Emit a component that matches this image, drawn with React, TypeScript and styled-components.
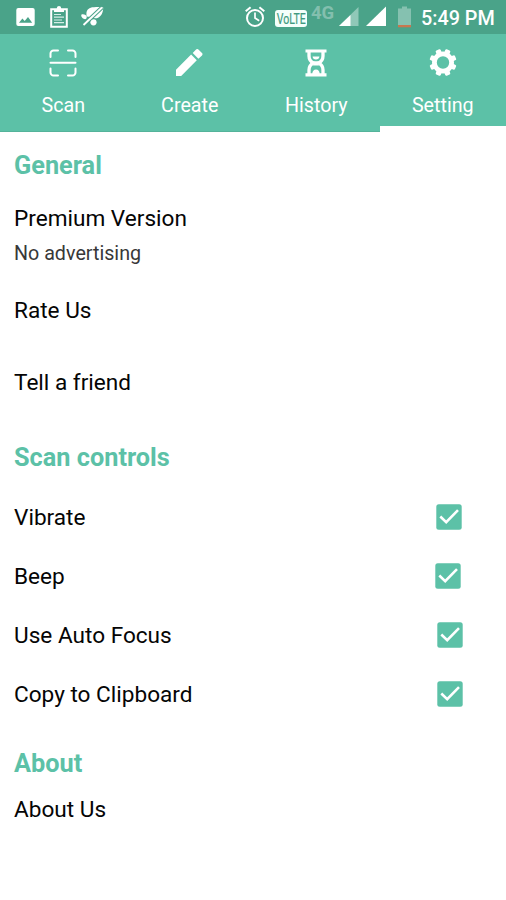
import React from 'react';
import styled, { createGlobalStyle } from 'styled-components';

const GlobalStyle = createGlobalStyle`
  * { box-sizing: border-box; }
  body { margin: 0; background: #fff; font-family: Roboto, "Liberation Sans", sans-serif; }
`;

const Screen = styled.main`
  width: 506px;
  height: 900px;
  overflow: hidden;
  background: #fff;
  color: #050505;
`;

const StatusBar = styled.header`
  display: flex;
  height: 34px;
  background: #4aa389;
  color: #fff;
`;

const StatusIcon = styled.svg<{ $gap: number }>`
  flex: none;
  height: 34px;
  margin-left: ${p => p.$gap}px;
`;

const VolteBadge = styled.span`
  display: flex;
  justify-content: center;
  width: 32px;
  height: 17px;
  margin: 10px 0 0 10px;
  border-radius: 3px;
  background: #f4fffb;
  color: #3f9a80;
`;

const VolteText = styled.span`
  flex: none;
  font-size: 15.5px;
  line-height: 18px;
  transform: scaleX(0.68);
  -webkit-text-stroke: 0.2px currentColor;
`;

const NetworkType = styled.span`
  width: 27px;
  margin: 3px 0 0 4px;
  font-size: 18.5px;
  font-weight: 700;
  line-height: 20px;
  color: #83bfae;
`;

const Clock = styled.time`
  margin-left: 10px;
  font-size: 19.8px;
  font-weight: 500;
  line-height: 37px;
  white-space: nowrap;
`;

const Tabs = styled.nav`
  display: grid;
  grid-template-columns: repeat(4, 1fr);
  height: 98px;
  background: #5cc1a7;
`;

const Tab = styled.button<{ $active?: boolean }>`
  display: flex;
  flex-direction: column;
  align-items: center;
  gap: 17px;
  padding: 15px 0 0;
  border: 0;
  border-bottom: ${p => (p.$active ? '6px solid #fff' : '1px solid #54b39a')};
  background: transparent;
  color: #fff;
  font: 400 19.7px/24px Roboto, sans-serif;
`;

const TabIcon = styled.svg`
  flex: none;
  width: 28px;
  height: 28px;
  display: block;
`;

const Settings = styled.div`
  padding: 0 0 0 14px;
`;

const Heading = styled.h2<{ $height: number; $top?: number }>`
  display: flex;
  align-items: center;
  height: ${p => p.$height}px;
  margin: ${p => p.$top ?? 0}px 0 0;
  color: #5cc1a7;
  font-size: 25.3px;
  font-weight: 700;
`;

const Row = styled.div<{ $height: number; $top?: number }>`
  display: flex;
  align-items: center;
  justify-content: space-between;
  height: ${p => p.$height}px;
  margin-top: ${p => p.$top ?? 0}px;
  font-size: 22.6px;
`;

const OptionLabel = styled.span`
  padding-top: 1px;
`;

const Note = styled.p`
  margin: 0;
  font-size: 19.7px;
  line-height: 32px;
  color: #383838;
`;

const Check = styled.svg<{ $right: number }>`
  width: 26px;
  height: 26px;
  margin-right: ${p => p.$right}px;
`;

const options = [
  { label: 'Vibrate', right: 44.4 },
  { label: 'Beep', right: 45.4 },
  { label: 'Use Auto Focus', right: 43.4 },
  { label: 'Copy to Clipboard', right: 42.6 },
];

function SignalAndBattery() {
  return (
    <>
      <StatusIcon $gap={1} width="20" viewBox="0 0 20 34" fill="#fff">
        <path d="M0 26 19.500 7v19Z" fill="#90c8b8" />
        <path d="M0 26 11.500 15v11Z" />
      </StatusIcon>
      <StatusIcon $gap={7} width="20" viewBox="0 0 20 34" fill="#fff">
        <path d="M0 26 20 6.500V26Z" />
      </StatusIcon>
      <StatusIcon $gap={12} width="13" viewBox="0 0 13 34">
        <path d="M4 6.500h5v2h4v17H0v-17h4Z" fill="#85c1b0" />
        <path d="M0 25h13v2.300H0Z" fill="#c7774f" />
      </StatusIcon>
    </>
  );
}

const teeth = [22.5, 67.5, 112.5, 157.5, 202.5, 247.5, 292.5, 337.5];

export default function App() {
  return (
    <Screen>
      <GlobalStyle />
      <StatusBar>
        <StatusIcon $gap={16} width="19" viewBox="0 0 19 34">
          <path fill="#fff" fillRule="evenodd" d="M2.300 8h14.400a2 2 0 0 1 2 2v14a2 2 0 0 1-2 2H2.300a2 2 0 0 1-2-2V10a2 2 0 0 1 2-2Zm.7 14.800h13.200L12 17l-3.300 4-2.300-2.600Z" />
        </StatusIcon>
        <StatusIcon $gap={15} width="18" viewBox="0 0 18 34">
          <path d="M1.200 9.200h15.600v17.500H1.200Z" fill="none" stroke="#fff" strokeWidth="2" />
          <path d="M4 12V9h2.500a2.600 2.600 0 0 1 5 0H14v3Z" fill="#fff" />
          <circle cx="9" cy="8" r="2.100" fill="#fff" />
          <path d="M4 14.500h7M4 17.200h10M4 20h8M4 22.700h10" stroke="#d6eee7" strokeWidth="1.200" />
        </StatusIcon>
        <StatusIcon $gap={13} width="24" viewBox="0 0 24 34">
          <path fill="#fff" d="M5.700 16.500C4.300 10 8 7 13 7.200c4.200-.6 8-.1 9.200.2.1 4.300-1.500 8.800-5.100 10.300-2 .8-4.500.8-6.200-.5ZM.5 14.400c2.900-.6 5.400.9 5.200 3.100-.3 1.700-1.500 2-3 1.300C.8 18-.3 16.200.5 14.400Z" />
          <circle cx="12.500" cy="22.300" r="3.100" fill="#fff" />
          <path d="M2.500 25 21 7.500" stroke="#4aa389" strokeWidth="3.900" />
          <path d="M2.500 25 21 7.500" stroke="#fff" strokeWidth="1.900" />
        </StatusIcon>
        <StatusIcon $gap={140} width="20" viewBox="0 0 20 34" fill="none" stroke="#fff" strokeWidth="2">
          <circle cx="10" cy="18" r="8" />
          <path d="M10 12.500V18l4.200 2.800" strokeWidth="1.700" />
          <path d="m.7 11.200 4.900-4M19.300 11.200l-4.900-4" />
        </StatusIcon>
        <VolteBadge><VolteText>VoLTE</VolteText></VolteBadge>
        <NetworkType>4G</NetworkType>
        <SignalAndBattery />
        <Clock>5:49 PM</Clock>
      </StatusBar>

      <Tabs>
        <Tab>
          <TabIcon viewBox="0 0 28 28" fill="none" stroke="#fff" strokeWidth="2" strokeLinecap="round">
            <path d="M1.500 8V4.500a3 3 0 0 1 3-3H9M19 1.500h4.500a3 3 0 0 1 3 3V8M26.500 19.500v4a3 3 0 0 1-3 3H19M9 26.500H4.500a3 3 0 0 1-3-3v-4M1.500 13.800h25" />
          </TabIcon>
          Scan
        </Tab>
        <Tab>
          <TabIcon viewBox="1.500 .5 28 28" fill="#fff">
            <path d="M1 21.800 16.600 6.100l5.700 5.700L6.700 27.500H1ZM18.200 4.500 21.600 1a1.700 1.700 0 0 1 2.300 0l3.600 3.600a1.700 1.700 0 0 1 0 2.300l-3.600 3.300Z" />
          </TabIcon>
          Create
        </Tab>
        <Tab>
          <TabIcon viewBox="0 0 28 28" fill="none" stroke="#fff">
            <path d="M3.500 2h21M3.500 25.800h21" strokeWidth="3.200" />
            <path d="M7 3v4c0 3.300 1.500 5.500 4.400 7C8.500 15.500 7 17.700 7 21v4M21 3v4c0 3.300-1.500 5.500-4.400 7 2.900 1.500 4.400 3.700 4.400 7v4" strokeWidth="3.300" />
            <path d="M10.600 7.500h6.800c0 2-1.500 3-3.400 3s-3.400-1-3.400-3ZM10.300 25c0-3 1.500-4.500 3.700-4.500s3.700 1.500 3.700 4.500ZM11 12.300h6l-1 1.700 1 2.500h-6l1-2.500Z" fill="#fff" stroke="none" />
          </TabIcon>
          History
        </Tab>
        <Tab $active>
          <TabIcon viewBox="0 .5 28 28" fill="none" stroke="#fff">
            <circle cx="14" cy="14" r="8.600" strokeWidth="4.800" />
            {teeth.map(angle => (
              <path key={angle} transform={`rotate(${angle} 14 14)`} d="M11.300 5V1.900Q11.300.4 12.500.4h3Q16.700.4 16.700 1.900V5Z" fill="#fff" stroke="none" />
            ))}
          </TabIcon>
          Setting
        </Tab>
      </Tabs>

      <Settings>
        <Heading $height={66}>General</Heading>
        <Row $height={40}>Premium Version</Row>
        <Note>No advertising</Note>
        <Row $height={72} $top={4}>Rate Us</Row>
        <Row $height={72}>Tell a friend</Row>
        <Heading $height={58} $top={10}>Scan controls</Heading>
        {options.map(({ label, right }, index) => (
          <Row key={label} $height={59} $top={index === 0 ? 1 : 0}>
            <OptionLabel>{label}</OptionLabel>
            <Check $right={right} viewBox="0 0 26 26" role="img" aria-label="Enabled">
              <rect x=".3" y=".3" width="25.400" height="25.400" rx="2.500" fill="#5cc1a7" />
              <path d="m4.300 12.500 5.900 5.600L22 6.200" fill="none" stroke="#fff" strokeWidth="2.600" />
            </Check>
          </Row>
        ))}
        <Heading $height={52} $top={14}>About</Heading>
        <Row $height={40}>About Us</Row>
      </Settings>
    </Screen>
  );
}
